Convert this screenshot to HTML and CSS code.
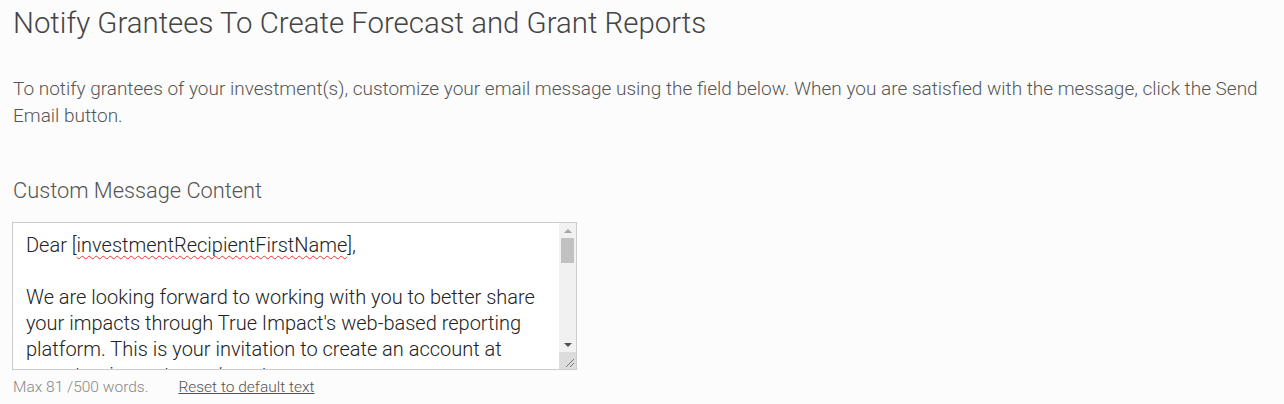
FILE: index.html
```html
<!DOCTYPE html>
<html>
<head>
<meta charset="utf-8">
<link rel="stylesheet" href="styles.css">
</head>
<body>
<div class="page">
  <h1 class="title">Notify Grantees To Create Forecast and Grant Reports</h1>
  <p class="intro">To notify grantees of your investment(s), customize your email message using the field below. When you are satisfied with the message, click the Send Email button.</p>
  <h2 class="section">Custom Message Content</h2>
  <div class="editor">
    <div class="editor-text">
      <p>Dear [<span class="misspelled">investmentRecipientFirstName</span>],</p>
      <p>&nbsp;</p>
      <p>We are looking forward to working with you to better share your impacts through True Impact's web-based reporting platform. This is your invitation to create an account at www.trueimpact.com/grantees</p>
    </div>
    <div class="scrollbar">
      <div class="arrow up"></div>
      <div class="thumb"></div>
      <div class="track"></div>
      <div class="arrow down"></div>
      <div class="grip">
        <svg width="14" height="14" viewBox="0 0 14 14"><path d="M4 12 L12 4 M8 12 L12 8" stroke="#777" stroke-width="1" fill="none"/></svg>
      </div>
    </div>
  </div>
  <div class="meta">
    <span class="count">Max 81 /500 words.</span>
    <a class="reset" href="#">Reset to default text</a>
  </div>
</div>
</body>
</html>
```
FILE: styles.css
```css
html, body {
  margin: 0;
  padding: 0;
  background: #fcfcfc;
}
body {
  font-family: Roboto, "Liberation Sans", sans-serif;
  font-weight: 300;
  color: #444;
}
.page {
  padding: 0 12px 0 13px;
}
.title {
  margin: 0;
  padding-top: 5px;
  font-size: 29.4px;
  font-weight: 300;
  line-height: 36px;
  color: #444;
}
.intro {
  margin: 34px 0 0 0;
  font-size: 19px;
  line-height: 27px;
  color: #555;
}
.section {
  margin: 47px 0 0 0;
  font-size: 21.8px;
  font-weight: 300;
  line-height: 30px;
  color: #555;
}
.editor {
  margin-top: 16px;
  width: 563px;
  height: 146px;
  border: 1px solid #ccc;
  background: #fff;
  display: flex;
  overflow: hidden;
  margin-left: -1px;
}
.editor-text {
  flex: 1;
  padding: 9px 13px 0 13px;
  font-size: 20px;
  line-height: 26px;
  color: #222;
}
.editor-text p {
  margin: 0;
}
.misspelled {
  text-decoration: underline wavy #e33;
  text-decoration-skip-ink: none;
  text-underline-offset: 3px;
  text-decoration-thickness: 1px;
}
.scrollbar {
  width: 17px;
  background: #f1f1f1;
  display: flex;
  flex-direction: column;
  align-items: center;
}
.arrow {
  width: 0;
  height: 0;
  border-left: 4px solid transparent;
  border-right: 4px solid transparent;
  margin: 6px 0 5px;
}
.arrow.up {
  border-bottom: 4px solid #a3a3a3;
}
.arrow.down {
  border-top: 4px solid #505050;
}
.thumb {
  width: 13px;
  height: 25px;
  background: #c1c1c1;
}
.track {
  flex: 1;
}
.grip {
  width: 17px;
  height: 17px;
  background: #dcdcdc;
  display: flex;
  align-items: flex-end;
  justify-content: flex-end;
}
.grip svg {
  display: block;
}
.meta {
  margin-top: 8px;
  font-size: 15.5px;
  line-height: 18px;
  display: flex;
  gap: 30px;
}
.count {
  color: #888;
}
.reset {
  color: #555;
  text-decoration: underline;
}
```
